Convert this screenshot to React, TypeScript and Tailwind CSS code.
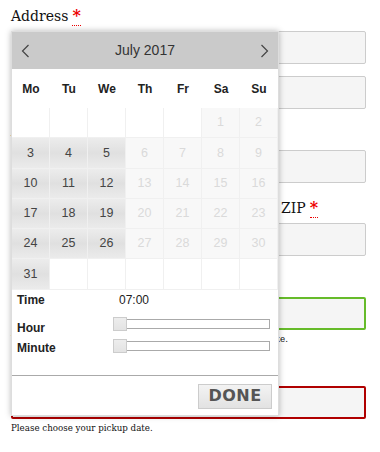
import React from 'react';

type Cell = { day?: number; enabled?: boolean };

const serif = "font-['DejaVu_Serif','Liberation_Serif',serif]";
const sans = "font-['Liberation_Sans',Arial,sans-serif]";

function buildCells(): Cell[] {
  const cells: Cell[] = [];
  for (let i = 0; i < 5; i++) cells.push({});
  for (let d = 1; d <= 31; d++) {
    const col = (d + 4) % 7;
    cells.push({ day: d, enabled: d === 31 || (col <= 2 && d > 2) });
  }
  while (cells.length < 42) cells.push({});
  return cells;
}

function Field({ className = 'border border-[#cccccc]' }: { className?: string }) {
  return <div className={`h-[33px] w-[355px] rounded-[2px] bg-[#f5f5f5] ${className}`} />;
}

function Required() {
  return (
    <abbr
      className="ml-[4px] border-b border-dotted border-[#ee0000] text-[16px] font-bold leading-[14px] text-[#ee0000] no-underline"
      title="required"
    >
      *
    </abbr>
  );
}

function Slider() {
  return (
    <div className="relative h-[14px] w-[157px]">
      <div className="mt-[2px] h-[10px] w-full border border-[#aaaaaa] bg-white" />
      <div className="absolute left-0 top-0 h-[14px] w-[14px] border border-[#cccccc] bg-[linear-gradient(#ededed,#e3e3e3)]" />
    </div>
  );
}

function Chevron({ dir }: { dir: 'left' | 'right' }) {
  return (
    <svg width="9" height="14" viewBox="0 0 9 14" fill="none">
      <path
        d={dir === 'left' ? 'M7.5 1 L1.5 7 L7.5 13' : 'M1.5 1 L7.5 7 L1.5 13'}
        stroke="#444"
        strokeWidth="1.2"
      />
    </svg>
  );
}

export default function App() {
  const cells = buildCells();
  const days = ['Mo', 'Tu', 'We', 'Th', 'Fr', 'Sa', 'Su'];

  return (
    <div className={`relative h-[452px] w-[380px] overflow-hidden bg-white text-[#111] ${serif}`}>
      {/* Form behind the picker */}
      <div className="pl-[11px] pt-[6px]">
        <div className="h-[20px] text-[14px] leading-[20px]">
          Address<Required />
        </div>
        <Field className="mt-[5px] border border-[#cccccc]" />
        <Field className="mt-[12px] border border-[#cccccc]" />
        <div className="mt-[12px] h-[20px] text-[14px] leading-[20px]">Apartment</div>
        <Field className="mt-[9px] border border-[#cccccc]" />
        <div className="mt-[15px] h-[20px] pl-[270px] text-[14px] leading-[20px]">
          ZIP<Required />
        </div>
        <Field className="mt-[5px] border border-[#cccccc]" />
        <div className="mt-[12px] h-[20px] text-[14px] leading-[20px]">Pickup time</div>
        <Field className="mt-[9px] border-2 border-[#66bb2a]" />
        <div className="mt-[3px] h-[12px] text-[8.7px] leading-[12px]">
          We'll be in touch to confirm the exact time for the pickup date.
        </div>
        <div className="mt-[17px] h-[20px] text-[14px] leading-[20px]">Pickup date</div>
        <Field className="mt-[4px] border-2 border-[#b00000]" />
        <div className="mt-[3px] text-[8.7px] leading-[12px]">Please choose your pickup date.</div>
      </div>

      {/* Date picker popup */}
      <div
        className={`absolute left-[11px] top-[31px] w-[268px] border border-[#dddddd] bg-white shadow-[0_0_6px_rgba(0,0,0,0.28)] ${sans}`}
      >
        <div className="flex h-[37px] items-center justify-between bg-[#cacaca] px-[9px]">
          <Chevron dir="left" />
          <span className="text-[14px] text-[#333]">July 2017</span>
          <Chevron dir="right" />
        </div>
        <div className="grid h-[39px] grid-cols-7 items-center text-center text-[12px] font-bold text-[#222]">
          {days.map((d) => (
            <span key={d}>{d}</span>
          ))}
        </div>
        <div className="grid grid-cols-7">
          {cells.map((c, i) => (
            <div
              key={i}
              className={`flex h-[30.3px] items-center justify-center border-b border-r border-[#f0f0f0] text-[12.5px] ${
                c.day === undefined
                  ? 'bg-white'
                  : c.enabled
                    ? 'bg-[linear-gradient(#ececec,#e0e0e0_50%,#ebebeb)] text-[#444]'
                    : 'bg-[#f8f8f8] text-[#dadada]'
              }`}
            >
              {c.day}
            </div>
          ))}
        </div>
        <div className="h-[83px] px-[5px] text-[12px] text-[#222]">
          <div className="mt-[2px] flex h-[16px] items-center">
            <span className="w-[96px] font-bold">Time</span>
            <span className="pl-[6px]">07:00</span>
          </div>
          <div className="mt-[9px] flex items-start">
            <span className="w-[96px] pt-[4px] font-bold leading-[14px]">Hour</span>
            <Slider />
          </div>
          <div className="mt-[4px] flex items-start">
            <span className="w-[96px] pt-[2px] font-bold leading-[14px]">Minute</span>
            <Slider />
          </div>
        </div>
        <div className="flex h-[40px] justify-end border-t border-[#aaaaaa] pr-[6px] pt-[8px]">
          <button className="h-[25px] w-[74px] border border-[#cccccc] bg-[linear-gradient(#f3f3f3,#e2e2e2)] font-['DejaVu_Sans',Verdana,sans-serif] text-[16px] font-bold leading-none tracking-[0.5px] text-[#555]">
            DONE
          </button>
        </div>
      </div>
    </div>
  );
}
